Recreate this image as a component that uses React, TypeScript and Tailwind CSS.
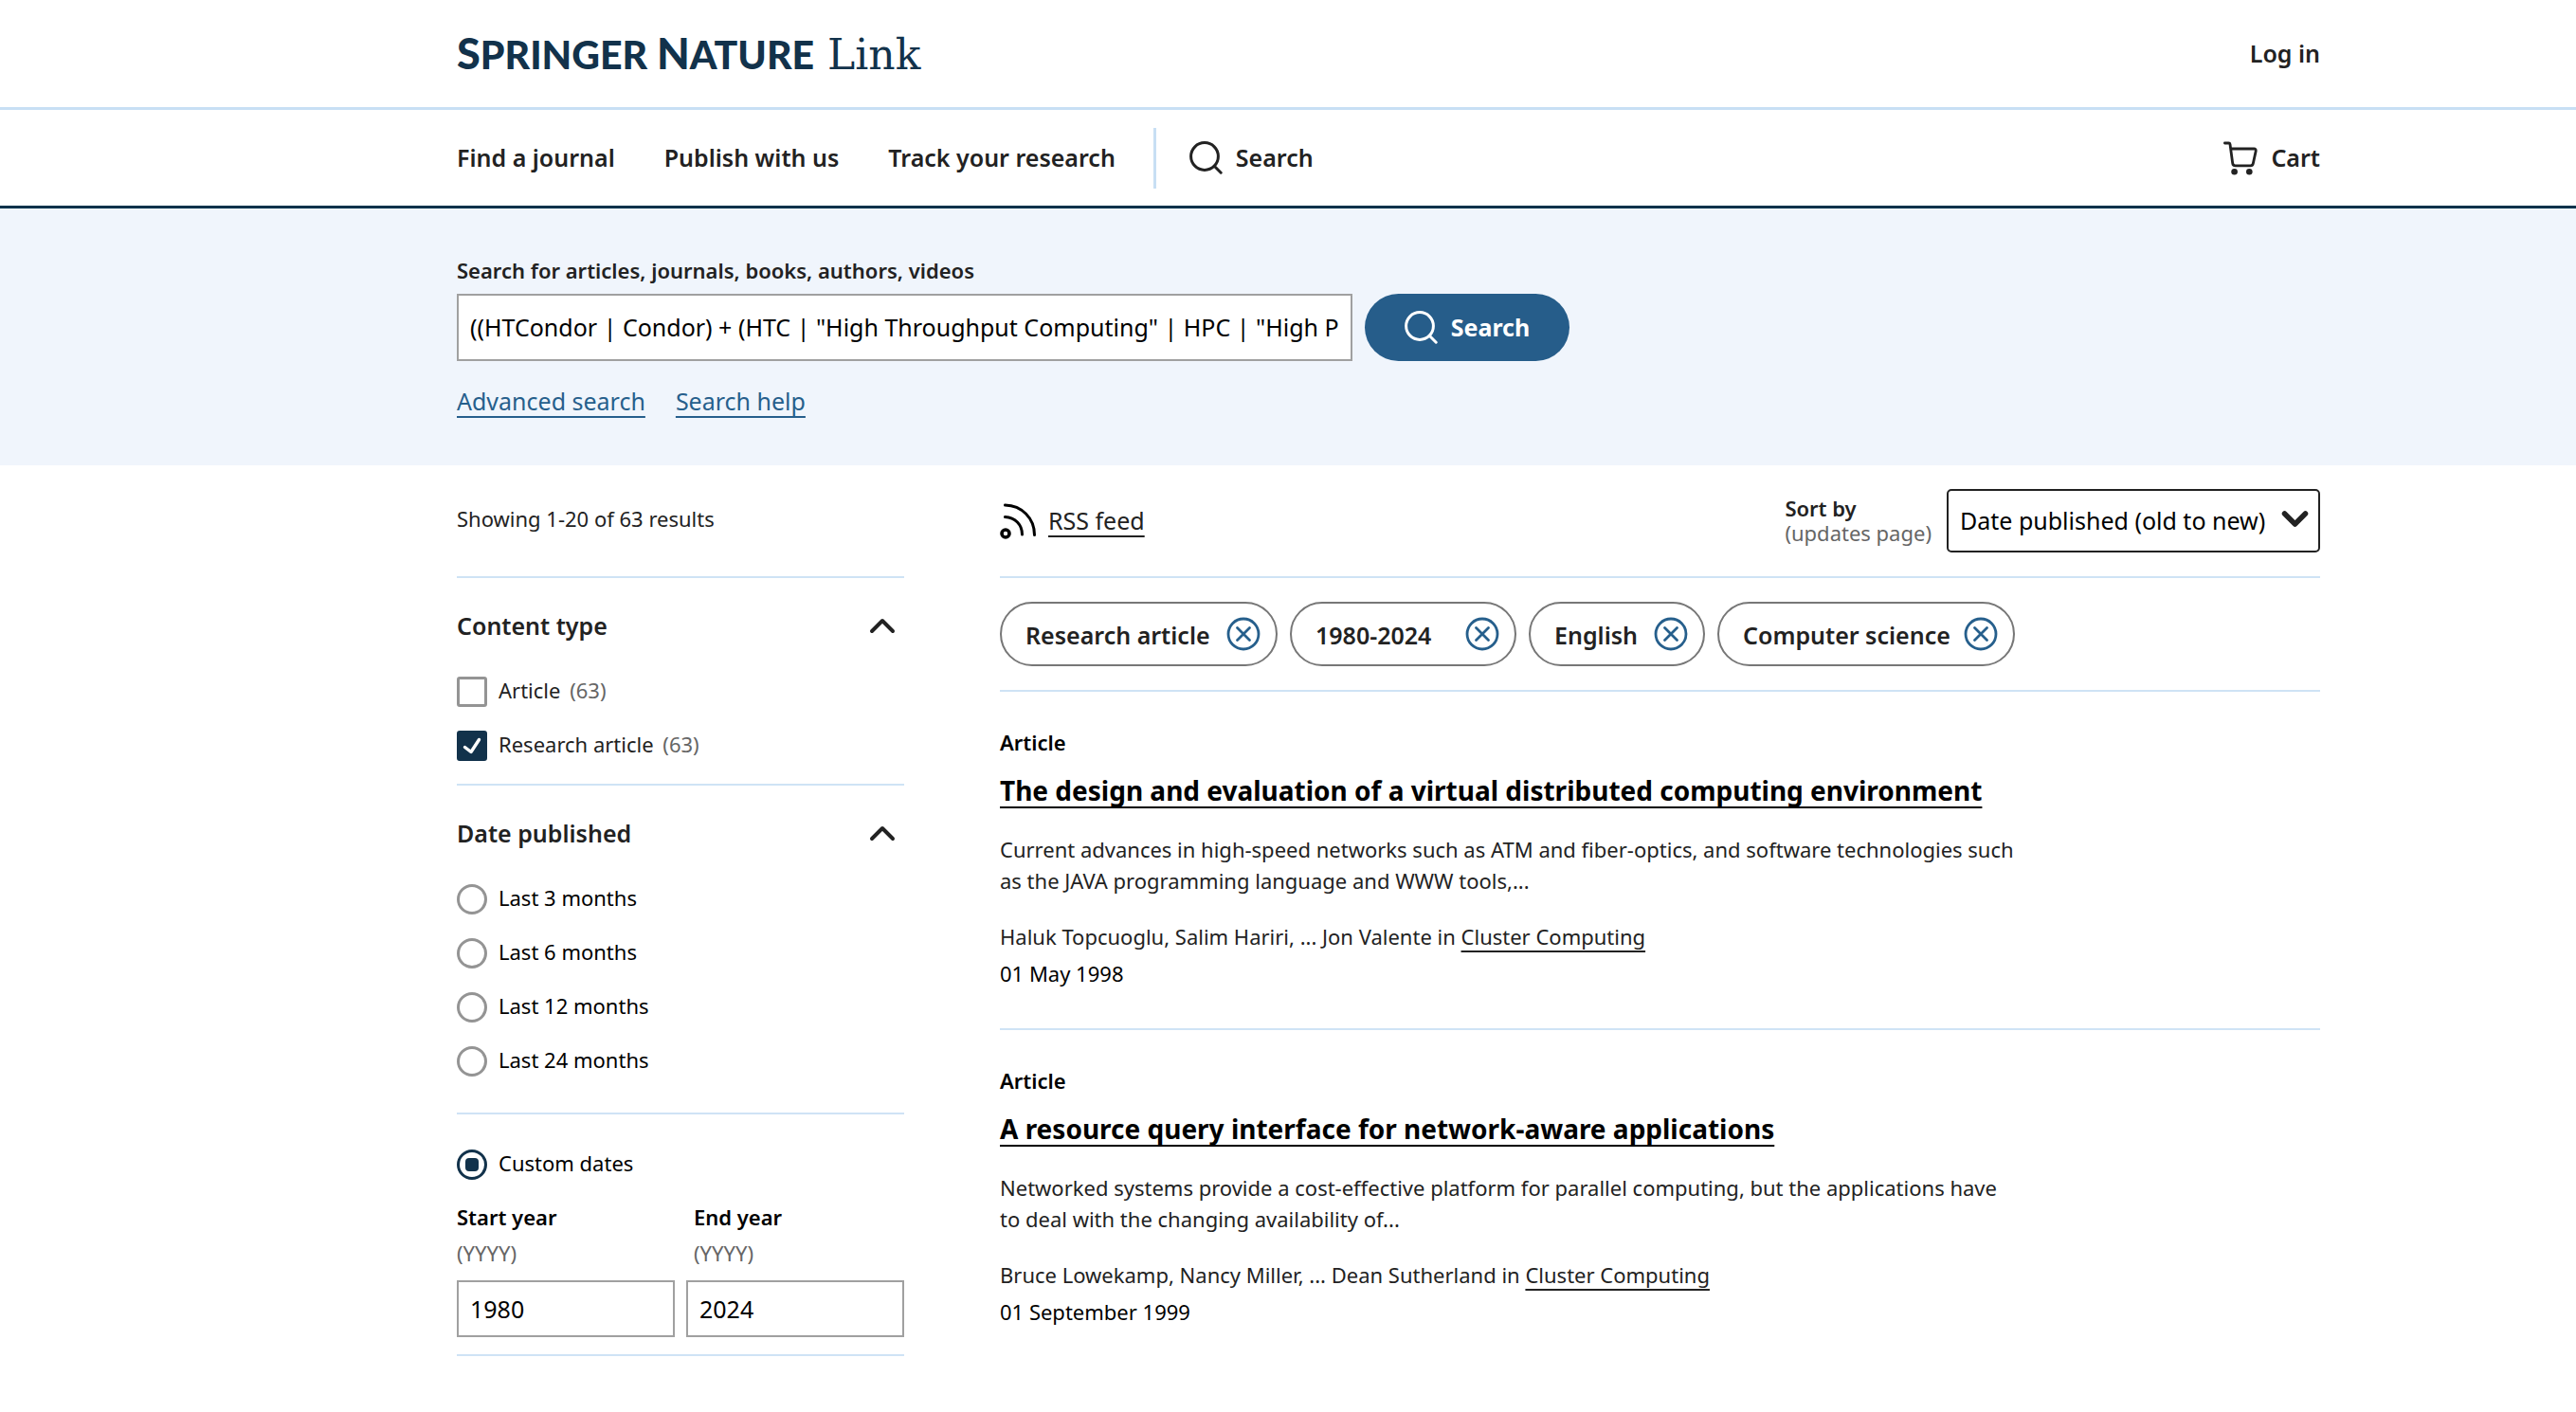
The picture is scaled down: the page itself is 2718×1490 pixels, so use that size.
import React from "react";

const SearchIcon = () => (
  <svg width="35" height="35" viewBox="0 0 35 35" fill="none" stroke="currentColor" strokeWidth="3" strokeLinecap="round" aria-hidden="true">
    <circle cx="16" cy="16" r="14.4" />
    <path d="M26.5 26.5 33.2 33.2" />
  </svg>
);

const CartIcon = () => (
  <svg width="36" height="36" viewBox="0 0 36 36" fill="none" stroke="currentColor" strokeWidth="2.8" strokeLinecap="round" strokeLinejoin="round" aria-hidden="true">
    <path d="M1.400 2H5.600Q6.800 2 7 3.200L9.700 23.300Q10 25.800 12.500 25.800H28.600Q30.800 25.800 31.300 23.600L34.200 10.400Q34.600 8 32.200 8H8" />
    <circle cx="11.6" cy="32.300" r="3.300" fill="currentColor" stroke="none" />
    <circle cx="27.3" cy="32.300" r="3.300" fill="currentColor" stroke="none" />
  </svg>
);

const RssIcon = () => (
  <svg width="38" height="38" viewBox="0 0 38 38" fill="none" stroke="#000" strokeWidth="3" strokeLinecap="round" aria-hidden="true">
    <path d="M5.5 2C23 2.500 36.500 15.500 36.500 33.500" />
    <path d="M5.500 14.500C16 15 23.500 22.500 23.500 33" />
    <circle cx="6" cy="32" r="4" strokeWidth="3.6" />
  </svg>
);

const ChevronUp = () => (
  <svg width="28" height="17" viewBox="0 0 28 17" fill="none" stroke="currentColor" strokeWidth="4" strokeLinecap="round" strokeLinejoin="round" aria-hidden="true">
    <path d="M3 14 14 3 25 14" />
  </svg>
);

const RemoveIcon = () => (
  <svg className="shrink-0" width="36" height="36" viewBox="0 0 36 36" fill="none" stroke="#265f8c" strokeWidth="2.8" strokeLinecap="round" aria-hidden="true">
    <circle cx="18" cy="18" r="16" />
    <path d="M11.500 11.500 24.500 24.500M24.500 11.500 11.500 24.500" />
  </svg>
);

const shell = "pl-[482px] pr-[270px]";
const link = "underline decoration-2 underline-offset-[6px] [text-decoration-skip-ink:none]";
const radio =
  "grid size-[32px] shrink-0 appearance-none place-content-center rounded-full border-[3px] border-[#949494] bg-white checked:border-[#12324b] checked:before:size-[14px] checked:before:rounded-[4px] checked:before:bg-[#12324b] checked:before:content-['']";

function CheckRow({ id, label, checked }: { id: string; label: string; checked?: boolean }) {
  return (
    <li className="flex items-start gap-3">
      <span className="relative size-[32px] shrink-0">
        <input
          id={id}
          type="checkbox"
          defaultChecked={checked}
          className="peer block size-[32px] appearance-none rounded-[3px] border-[3px] border-[#949494] bg-white checked:border-[#12324b] checked:bg-[#12324b]"
        />
        <svg className="pointer-events-none absolute inset-0 hidden peer-checked:block" width="32" height="32" viewBox="0 0 32 32" fill="none" stroke="#fff" strokeWidth="3.4" strokeLinecap="round" strokeLinejoin="round" aria-hidden="true">
          <path d="M8.500 17.500 15 22.500 23.500 9.500" />
        </svg>
      </span>
      <label htmlFor={id} className="text-[22px] leading-[28px]">
        {label} <span className="ml-1 text-[#666]">(63)</span>
      </label>
    </li>
  );
}

function FilterHeading({ children }: { children: React.ReactNode }) {
  return (
    <h2>
      <button type="button" aria-expanded="true" className="flex w-full items-center justify-between pr-[9px] text-[25px] leading-[34px] font-semibold">
        {children}
        <ChevronUp />
      </button>
    </h2>
  );
}

const chips = [
  { label: "Research article", width: "min-w-[293px]" },
  { label: "1980-2024", width: "min-w-[239px]" },
  { label: "English", width: "min-w-[186px]" },
  { label: "Computer science", width: "min-w-[314px]" },
];

const results = [
  {
    title: "The design and evaluation of a virtual distributed computing environment",
    text: "Current advances in high-speed networks such as ATM and fiber-optics, and software technologies such as the JAVA programming language and WWW tools,...",
    authors: "Haluk Topcuoglu, Salim Hariri, ... Jon Valente",
    date: "01 May 1998",
  },
  {
    title: "A resource query interface for network-aware applications",
    text: "Networked systems provide a cost-effective platform for parallel computing, but the applications have to deal with the changing availability of...",
    authors: "Bruce Lowekamp, Nancy Miller, ... Dean Sutherland",
    date: "01 September 1999",
  },
];

export default function App() {
  return (
    <div className="min-h-screen bg-white font-['Noto_Sans','Open_Sans',sans-serif] text-[#222]">
      <header className="border-b-[3px] border-[#01324b]">
        <div className="border-b-[3px] border-[#c8dff4]">
          <div className={`${shell} flex h-[113px] items-center justify-between`}>
            <a href="#" aria-label="Springer Nature Link" className="flex items-baseline text-[#12324b]">
              <span className="font-['Lato',sans-serif] text-[41px] leading-[56px] font-black">
                <span className="text-[45px]">S</span>PRINGER <span className="text-[45px]">N</span>ATURE
              </span>
              <span className="ml-[14px] font-['DejaVu_Serif',serif] text-[44px] leading-[56px]">Link</span>
            </a>
            <a href="#" className="text-[25px] font-semibold">Log in</a>
          </div>
        </div>
        <nav className={`${shell} flex h-[101px] items-center text-[25px] font-semibold`}>
          <div className="flex gap-[52px]">
            <a href="#">Find a journal</a>
            <a href="#">Publish with us</a>
            <a href="#">Track your research</a>
          </div>
          <div className="ml-[40px] h-[64px] w-[3px] bg-[#c8dff4]" />
          <a href="#" className="ml-[35px] flex items-center gap-[14px]"><SearchIcon />Search</a>
          <a href="#" className="ml-auto flex items-center gap-[14px]"><CartIcon />Cart</a>
        </nav>
      </header>

      <form className={`${shell} bg-[#f0f5fc] pt-[50px] pb-[51px]`} onSubmit={(e) => e.preventDefault()}>
        <label htmlFor="query" className="block text-[22px] leading-[30px] font-semibold">Search for articles, journals, books, authors, videos</label>
        <div className="mt-[10px] flex gap-[13px]">
          <input
            id="query"
            type="text"
            defaultValue={'((HTCondor | Condor) + (HTC | "High Throughput Computing" | HPC | "High Performance Computing"))'}
            className="h-[71px] w-[945px] border-2 border-[#a0a0a0] bg-white px-3 pb-[2px] text-[25px] text-black"
          />
          <button type="submit" className="flex h-[71px] w-[216px] items-center justify-center gap-[14px] rounded-full bg-[#265d8a] text-[25px] font-bold text-white">
            <SearchIcon />Search
          </button>
        </div>
        <div className="mt-[25px] flex gap-[32px] text-[25px] leading-[34px] text-[#265f8c]">
          <a href="#" className={link}>Advanced search</a>
          <a href="#" className={link}>Search help</a>
        </div>
      </form>

      <main className={`${shell} grid grid-cols-[472px_minmax(0,1fr)] gap-x-[101px]`}>
        <aside>
          <p className="flex h-[117px] items-center pb-1 text-[22px]">Showing 1-20 of 63 results</p>
          <section className="border-t-2 border-[#cfe3f5] pt-[33px] pb-[24px]">
            <FilterHeading>Content type</FilterHeading>
            <ul className="mt-[37px] grid gap-[25px]">
              <CheckRow id="type-article" label="Article" />
              <CheckRow id="type-research" label="Research article" checked />
            </ul>
          </section>
          <section className="border-t-2 border-[#cfe3f5] pt-[33px]">
            <FilterHeading>Date published</FilterHeading>
            <ul className="mt-[37px] grid gap-[25px] pb-[38px] text-black">
              {["3", "6", "12", "24"].map((n) => (
                <li key={n} className="flex items-start gap-3">
                  <input id={`last-${n}`} type="radio" name="date" className={radio} />
                  <label htmlFor={`last-${n}`} className="text-[22px] leading-[28px]">Last {n} months</label>
                </li>
              ))}
            </ul>
          </section>
          <section className="border-y-2 border-[#cfe3f5] pt-[37px] pb-[18px] text-black">
            <div className="flex items-start gap-3">
              <input id="custom" type="radio" name="date" defaultChecked className={radio} />
              <label htmlFor="custom" className="text-[22px] leading-[28px]">Custom dates</label>
            </div>
            <div className="mt-[24px] grid grid-cols-2 gap-3">
              {[["start", "Start year", "1980"], ["end", "End year", "2024"]].map(([id, label, value]) => (
                <div key={id}>
                  <label htmlFor={id} className={`block text-[22px] leading-[30px] font-semibold ${id === "end" ? "pl-2" : ""}`}>
                    {label}
                    <span className="mt-2 block font-normal text-[#666]">(YYYY)</span>
                  </label>
                  <input id={id} type="text" defaultValue={value} className="mt-[14px] block h-[60px] w-full border-2 border-[#a0a0a0] px-3 text-[25px]" />
                </div>
              ))}
            </div>
          </section>
        </aside>

        <div>
          <div className="flex h-[117px] items-center justify-between">
            <a href="#" className="flex items-center gap-[13px] text-[25px]">
              <RssIcon /><span className={link}>RSS feed</span>
            </a>
            <div className="flex items-center gap-[16px]">
              <label htmlFor="sort" className="pb-[2px] text-[22px] leading-[26px] font-semibold">
                Sort by
                <span className="block font-normal text-[#666]">(updates page)</span>
              </label>
              <div className="relative">
                <select id="sort" className="block h-[67px] w-[394px] appearance-none rounded-[5px] border-2 border-[#222] bg-white pl-3 text-[25px] text-black">
                  <option>Date published (old to new)</option>
                </select>
                <svg className="pointer-events-none absolute top-[22px] right-[12px]" width="29" height="20" viewBox="0 0 29 20" fill="none" stroke="#222" strokeWidth="5.500" strokeLinecap="round" strokeLinejoin="round" aria-hidden="true">
                  <path d="M3.500 4 14.500 15 25.500 4" />
                </svg>
              </div>
            </div>
          </div>
          <ul className="flex flex-wrap gap-[13px] border-y-2 border-[#cfe3f5] py-[25px]">
            {chips.map(({ label, width }) => (
              <li key={label}>
                <button type="button" className={`${width} flex h-[68px] items-center justify-between gap-[14px] rounded-full border-2 border-[#777] pr-[16px] pl-[25px] text-[25px] font-semibold`}>
                  <span className="pt-1">{label}</span><RemoveIcon />
                </button>
              </li>
            ))}
          </ul>
          <ol className="divide-y-2 divide-[#cfe3f5]">
            {results.map((r) => (
              <li key={r.title} className="pt-[38px] pb-[41px] text-[22px] leading-[33px]">
                <p className="leading-[30px] font-semibold text-black">Article</p>
                <h3 className="mt-[18px] text-[28px] leading-[36px] font-bold text-black">
                  <a href="#" className={link}>{r.title}</a>
                </h3>
                <p className="mt-[28px] max-w-[1074px]">{r.text}</p>
                <p className="mt-[26px]">{r.authors} in <a href="#" className={link}>Cluster Computing</a></p>
                <p className="mt-[6px] text-black">{r.date}</p>
              </li>
            ))}
          </ol>
        </div>
      </main>
    </div>
  );
}
